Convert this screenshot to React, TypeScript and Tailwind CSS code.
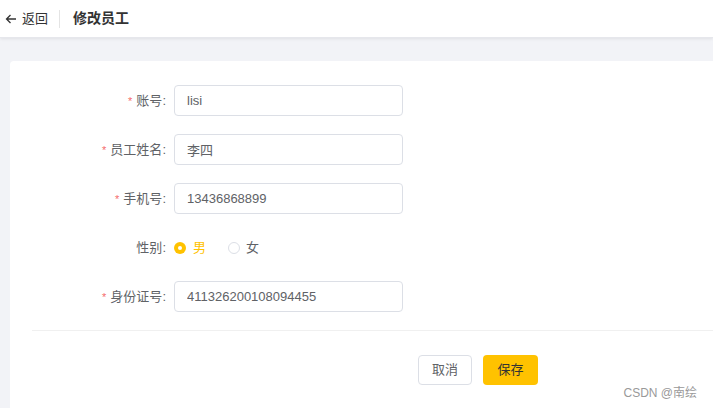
import { useState } from "react";

const font = { fontFamily: '"Liberation Sans", "Noto Sans CJK SC", sans-serif' };

function Label({ text, required }: { text: string; required?: boolean }) {
  return (
    <div className="w-[164px] pr-[8px] text-right text-[13px] text-[#606266] shrink-0">
      {required && <span className="text-[#f56c6c] mr-[4px] text-[11px]">*</span>}
      {text}:
    </div>
  );
}

function Field({ label, value }: { label: string; value: string }) {
  return (
    <div className="flex items-center h-[31px] mb-[18px]">
      <Label text={label} required />
      <input
        className="w-[229px] h-[31px] border border-[#dcdfe6] rounded-[4px] px-[12px] text-[13px] text-[#606266] outline-none"
        defaultValue={value}
      />
    </div>
  );
}

export default function App() {
  const [sex, setSex] = useState("1");

  return (
    <div className="w-[713px] h-[408px] bg-[#f2f3f7] overflow-hidden relative" style={font}>
      <div className="h-[38px] bg-white flex items-center shadow-[0_1px_3px_rgba(0,0,0,0.08)] border-b border-[#e6e7ec]">
        <div className="flex items-center pl-[5px] text-[13px] text-[#333]">
          <svg width="12" height="12" viewBox="0 0 12 12" fill="none" stroke="#333" strokeWidth="1.3">
            <path d="M11 6H1.5M5.5 2L1.5 6l4 4" />
          </svg>
          <span className="ml-[5px]">返回</span>
        </div>
        <div className="w-px h-[18px] bg-[#e4e4e4] ml-[11px]" />
        <div className="ml-[13px] text-[14px] font-bold text-[#333]">修改员工</div>
      </div>

      <div className="ml-[10px] mt-[23px] bg-white rounded-tl-[4px] h-[400px] pt-[24px]">
        <Field label="账号" value="lisi" />
        <Field label="员工姓名" value="李四" />
        <Field label="手机号" value="13436868899" />
        <div className="flex items-center h-[31px] mb-[18px]">
          <Label text="性别" />
          <label className="flex items-center cursor-pointer" onClick={() => setSex("1")}>
            <span
              className={
                sex === "1"
                  ? "w-[12px] h-[12px] rounded-full bg-[#ffc200] flex items-center justify-center"
                  : "w-[12px] h-[12px] rounded-full border border-[#dcdfe6]"
              }
            >
              {sex === "1" && <span className="w-[4px] h-[4px] rounded-full bg-white" />}
            </span>
            <span className={sex === "1" ? "ml-[7px] text-[13px] text-[#ffc200]" : "ml-[7px] text-[13px] text-[#606266]"}>男</span>
          </label>
          <label className="flex items-center ml-[22px] cursor-pointer" onClick={() => setSex("0")}>
            <span
              className={
                sex === "0"
                  ? "w-[12px] h-[12px] rounded-full bg-[#ffc200] flex items-center justify-center"
                  : "w-[12px] h-[12px] rounded-full border border-[#dcdfe6]"
              }
            >
              {sex === "0" && <span className="w-[4px] h-[4px] rounded-full bg-white" />}
            </span>
            <span className={sex === "0" ? "ml-[6px] text-[13px] text-[#ffc200]" : "ml-[6px] text-[13px] text-[#606266]"}>女</span>
          </label>
        </div>
        <Field label="身份证号" value="411326200108094455" />

        <div className="ml-[22px] border-t border-[#f0f0f0]" />

        <div className="flex pl-[408px] pt-[24px] gap-[11px]">
          <button className="w-[54px] h-[30px] border border-[#dcdfe6] rounded-[4px] bg-white text-[13px] text-[#606266]">
            取消
          </button>
          <button className="w-[55px] h-[30px] rounded-[4px] bg-[#ffc200] text-[13px] text-[#333]">
            保存
          </button>
        </div>
      </div>

      <div className="absolute right-[16px] bottom-[6px] text-[12px] text-[#999]">CSDN @南绘</div>
    </div>
  );
}
